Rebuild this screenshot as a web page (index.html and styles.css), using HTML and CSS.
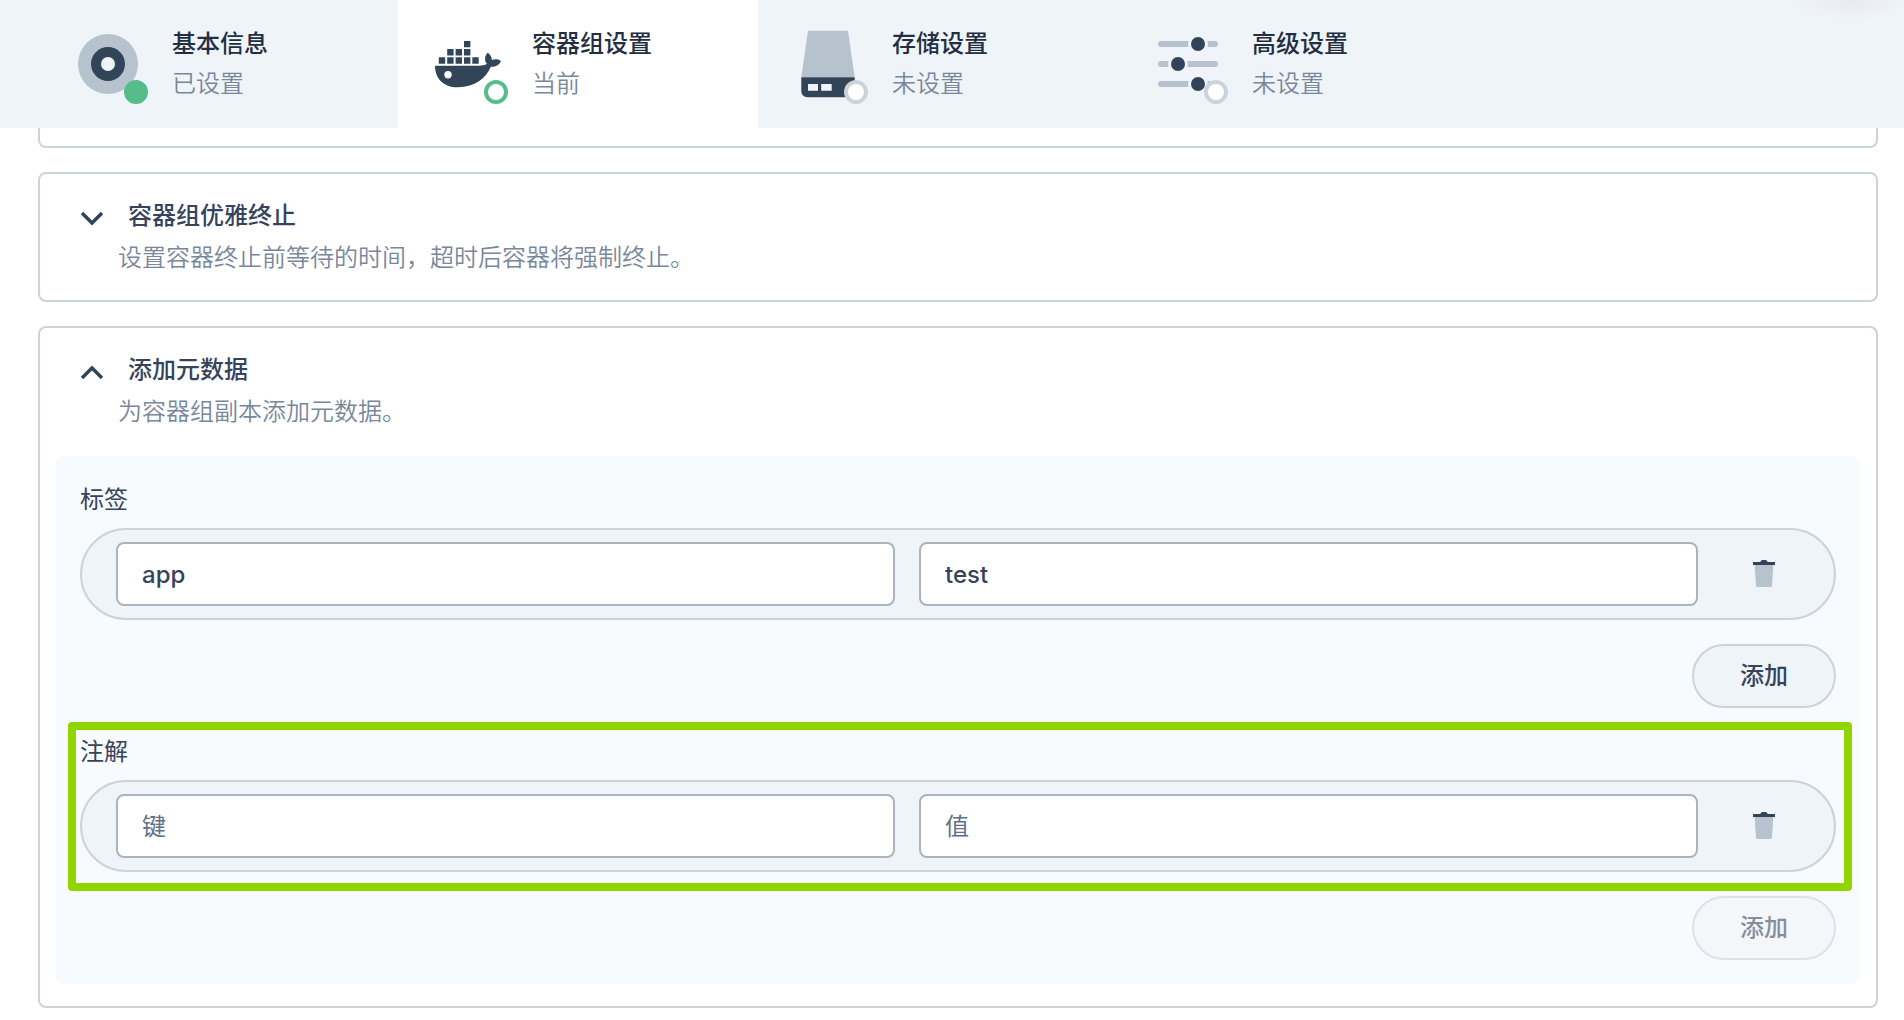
FILE: index.html
```html
<!DOCTYPE html>
<html lang="zh-CN">
<head>
  <meta charset="UTF-8">
  <meta name="viewport" content="width=device-width, initial-scale=1.0">
  <title>容器组设置</title>
  <link rel="stylesheet" href="styles.css">
</head>
<body>
  <nav class="steps">
    <button type="button" class="step">
      <span class="step-icon">
        <svg viewBox="0 0 72 72" width="72" height="72">
          <circle class="light" cx="36" cy="36" r="30"/>
          <circle class="dark" cx="36" cy="36" r="17"/>
          <circle class="hole" cx="36" cy="36" r="7"/>
        </svg>
        <span class="status done"></span>
      </span>
      <span class="step-text">
        <span class="step-title">基本信息</span>
        <span class="step-state">已设置</span>
      </span>
    </button>
    <button type="button" class="step active" aria-current="step">
      <span class="step-icon">
        <svg viewBox="0 0 72 72" width="72" height="72">
          <path class="dark" d="M32 13h6.400v6.200h-6.400zM15.200 21h6.400v6.400h-6.400zM23.600 21h6.400v6.400h-6.400zM32 21h6.400v6.400h-6.400zM6.800 29.300h6.400v6.400h-6.400zM15.200 29.300h6.400v6.400h-6.400zM23.600 29.300h6.400v6.400h-6.400zM32 29.300h6.400v6.400h-6.400zM40.300 29.300h6.400v6.400h-6.400z"/>
          <path class="dark" d="M3 37.700H47C50 37.700 53 37.200 55 35.800C52.300 33 52.300 28 55.700 24.700C58.500 26.500 60 29.500 59.800 32C63 30.800 66.500 31 69 33C67.500 37 63.500 39 58.900 38.800C54 50 43 59.300 26 59.300C11 59.300 3 50 3 37.700Z"/>
          <circle class="eye" cx="16" cy="46.700" r="3.700"/>
        </svg>
        <span class="status current"></span>
      </span>
      <span class="step-text">
        <span class="step-title">容器组设置</span>
        <span class="step-state">当前</span>
      </span>
    </button>
    <button type="button" class="step">
      <span class="step-icon">
        <svg viewBox="0 0 72 72" width="72" height="72">
          <path class="light" d="M16 2.700H56L62.700 49.300H9.300Z"/>
          <path class="dark" d="M9.300 49.300H62.700V63.300a6 6 0 0 1-6 6H15.300a6 6 0 0 1-6-6Z"/>
          <path class="hole" d="M16 56h10v6.700H16zM29.200 56h10.500v6.700H29.200z"/>
        </svg>
        <span class="status"></span>
      </span>
      <span class="step-text">
        <span class="step-title">存储设置</span>
        <span class="step-state">未设置</span>
      </span>
    </button>
    <button type="button" class="step">
      <span class="step-icon">
        <svg viewBox="0 0 72 72" width="72" height="72">
          <rect class="light" x="6" y="13" width="60" height="6" rx="3"/>
          <rect class="light" x="6" y="33" width="60" height="6" rx="3"/>
          <rect class="light" x="6" y="53" width="60" height="6" rx="3"/>
          <circle class="hole" cx="46" cy="16" r="10"/>
          <circle class="hole" cx="26" cy="36" r="10"/>
          <circle class="hole" cx="46" cy="56" r="10"/>
          <circle class="dark" cx="46" cy="16" r="7"/>
          <circle class="dark" cx="26" cy="36" r="7"/>
          <circle class="dark" cx="46" cy="56" r="7"/>
        </svg>
        <span class="status"></span>
      </span>
      <span class="step-text">
        <span class="step-title">高级设置</span>
        <span class="step-state">未设置</span>
      </span>
    </button>
  </nav>

  <main class="content">
    <!-- end of the card that is scrolled under the steps bar -->
    <div class="card card-end"></div>

    <section class="card">
      <button type="button" class="card-header" aria-expanded="false">
        <span class="card-title">
          <svg class="chevron" viewBox="0 0 24 24" width="24" height="24"><path d="M2 9l10 10L22 9"/></svg>
          容器组优雅终止
        </span>
        <span class="card-desc">设置容器终止前等待的时间，超时后容器将强制终止。</span>
      </button>
    </section>

    <section class="card">
      <button type="button" class="card-header" aria-expanded="true">
        <span class="card-title">
          <svg class="chevron" viewBox="0 0 24 24" width="24" height="24"><path d="M2 20l10-10 10 10"/></svg>
          添加元数据
        </span>
        <span class="card-desc">为容器组副本添加元数据。</span>
      </button>

      <form class="panel">
        <div class="group">
          <div class="field">
            <label class="field-label" for="labelKey">标签</label>
            <div class="pair">
              <input type="text" id="labelKey" placeholder="键" value="app">
              <input type="text" placeholder="值" value="test" aria-label="值">
              <button type="button" class="delete" aria-label="删除">
                <svg viewBox="0 0 32 32" width="32" height="32">
                  <path class="light" d="M6.600 7H25.400L24 27.500a1.600 1.600 0 0 1-1.600 1.500H9.600a1.600 1.600 0 0 1-1.600-1.500Z"/>
                  <path class="dark" d="M5 4h7.300c.5-1.300 1.200-2 2.200-2h3c1 0 1.700.7 2.200 2H27v3H5z"/>
                </svg>
              </button>
            </div>
          </div>
          <button type="button" class="add">添加</button>
        </div>

        <div class="group">
          <div class="field highlight">
            <label class="field-label" for="noteKey">注解</label>
            <div class="pair">
              <input type="text" id="noteKey" placeholder="键">
              <input type="text" placeholder="值" aria-label="值">
              <button type="button" class="delete" aria-label="删除">
                <svg viewBox="0 0 32 32" width="32" height="32">
                  <path class="light" d="M6.600 7H25.400L24 27.500a1.600 1.600 0 0 1-1.600 1.500H9.600a1.600 1.600 0 0 1-1.600-1.500Z"/>
                  <path class="dark" d="M5 4h7.300c.5-1.300 1.200-2 2.200-2h3c1 0 1.700.7 2.200 2H27v3H5z"/>
                </svg>
              </button>
            </div>
          </div>
          <button type="button" class="add" disabled>添加</button>
        </div>
      </form>
    </section>
  </main>
</body>
</html>
```
FILE: styles.css
```css
* {
  box-sizing: border-box;
}
body {
  margin: 0;
  background-color: #fff;
  color: #36435c;
  font-family: Inter, "Noto Sans CJK SC", sans-serif;
  font-size: 24px;
  line-height: 40px;
}
button,
input {
  font: inherit;
  color: inherit;
}
button {
  cursor: pointer;
}
svg {
  display: block;
}
.light {
  fill: #b6c2cd;
}
.dark {
  fill: #324558;
}
.hole {
  fill: #eff4f9;
}
.eye {
  fill: #fff;
}

/* steps bar */
.steps {
  display: flex;
  padding-left: 38px;
  background-color: #eff4f9;
  background-image: radial-gradient(60px 20px at right 54px top 0, #e8ebf0, #eff4f9);
  background-repeat: no-repeat;
}
.step {
  display: flex;
  align-items: center;
  gap: 28px;
  width: 360px;
  padding: 24px 34px;
  border: none;
  background: none;
  text-align: left;
}
.step.active {
  background-color: #fff;
}
.step-icon {
  position: relative;
}
.status {
  position: absolute;
  right: -4px;
  bottom: -4px;
  width: 24px;
  height: 24px;
  border: 4px solid #ccd3db;
  border-radius: 50%;
  background-color: #fff;
}
.status.current {
  border-color: #55bc8a;
}
.status.done {
  border-color: #55bc8a;
  background-color: #55bc8a;
}
.step-text {
  display: flex;
  flex-direction: column;
}
.step-title {
  color: #242e42;
  font-weight: 500;
}
.step-state {
  color: #79879c;
  font-weight: 350;
}

/* cards */
.content {
  display: flex;
  flex-direction: column;
  gap: 24px;
  padding: 0 26px 12px 38px;
}
.card {
  border: 2px solid #ccd3db;
  border-radius: 8px;
}
.card-end {
  height: 20px;
  border-top: none;
  border-radius: 0 0 8px 8px;
}
.card-header {
  display: block;
  width: 100%;
  padding: 21px 40px;
  border: none;
  background: none;
  line-height: 42px;
  text-align: left;
}
.card-title {
  display: flex;
  align-items: center;
  gap: 24px;
  font-weight: 500;
}
.card-desc {
  display: block;
  padding-left: 38px;
  color: #79879c;
  font-weight: 350;
}
.chevron {
  fill: none;
  stroke: #324558;
  stroke-width: 3.5;
}

/* metadata form */
.panel {
  display: flex;
  flex-direction: column;
  gap: 24px;
  margin: 2px 16px 22px;
  padding: 24px;
  border-radius: 8px;
  background-color: #f7fbfe;
}
.group {
  display: flex;
  flex-direction: column;
  gap: 24px;
}
.field {
  position: relative;
}
.field-label {
  display: block;
  margin-bottom: 8px;
}
.pair {
  display: flex;
  gap: 24px;
  padding: 12px 34px;
  border: 2px solid #ccd3db;
  border-radius: 46px;
  background-color: #eff4f9;
}
.pair input {
  flex: 1;
  min-width: 0;
  height: 64px;
  padding: 0 24px;
  border: 2px solid #abb4be;
  border-radius: 8px;
  background-color: #fff;
  font-weight: 500;
}
.pair input::placeholder {
  color: #5f708a;
  font-weight: 400;
  opacity: 1;
}
.delete {
  display: flex;
  align-items: center;
  justify-content: center;
  width: 72px;
  margin-left: 6px;
  padding: 0;
  border: none;
  background: none;
}
.add {
  align-self: flex-end;
  width: 144px;
  height: 64px;
  padding: 0;
  border: 2px solid #ccd3db;
  border-radius: 32px;
  background-color: #eff4f9;
  font-weight: 500;
}
.add:disabled {
  border-color: #dee1e8;
  background-color: #f5f6fa;
  color: #868e9e;
  cursor: not-allowed;
}

/* green frame over the annotation field */
.highlight::after {
  content: "";
  position: absolute;
  top: -10px;
  right: -16px;
  bottom: -19px;
  left: -12px;
  border: 8px solid #91d500;
  border-radius: 4px;
  pointer-events: none;
}
```
